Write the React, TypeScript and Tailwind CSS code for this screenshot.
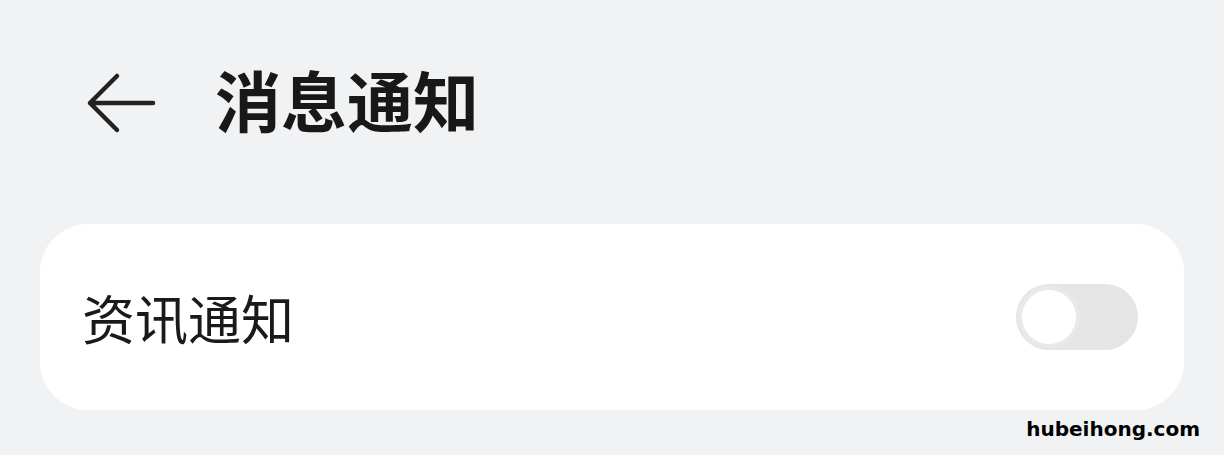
export default function App() {
  return (
    <div
      className="relative w-[1224px] h-[455px] bg-[#f1f2f4] overflow-hidden"
      style={{ fontFamily: '"Noto Sans CJK SC", "Noto Sans", sans-serif' }}
    >
      {/* Header */}
      <div className="h-[206px] flex items-center pl-[86px]">
        <svg width="70" height="62" viewBox="0 0 70 62" className="shrink-0">
          <path
            d="M67 31 H4 M31 4 L4 31 L31 58"
            fill="none"
            stroke="#222"
            strokeWidth="4.5"
            strokeLinecap="round"
            strokeLinejoin="round"
          />
        </svg>
        <h1 className="ml-[59px] mb-[10px] text-[66px] font-semibold text-[#181818] leading-none">
          消息通知
        </h1>
      </div>

      {/* Card */}
      <div className="mt-[18px] mx-[40px] h-[186px] bg-white rounded-[48px] flex items-center justify-between pl-[42px] pr-[46px]">
        <span className="text-[53px] text-[#1a1a1a] leading-none">资讯通知</span>
        <div className="w-[122px] h-[66px] rounded-full bg-[#e5e5e5] p-[2px] flex items-center">
          <div className="w-[62px] h-[62px] rounded-full bg-white border-[4px] border-[#e9e9e9]" />
        </div>
      </div>

      {/* Watermark */}
      <div
        className="absolute right-[24px] bottom-[11px] text-[20px] font-bold text-black"
        style={{ fontFamily: '"DejaVu Sans", sans-serif' }}
      >
        hubeihong.com
      </div>
    </div>
  );
}
